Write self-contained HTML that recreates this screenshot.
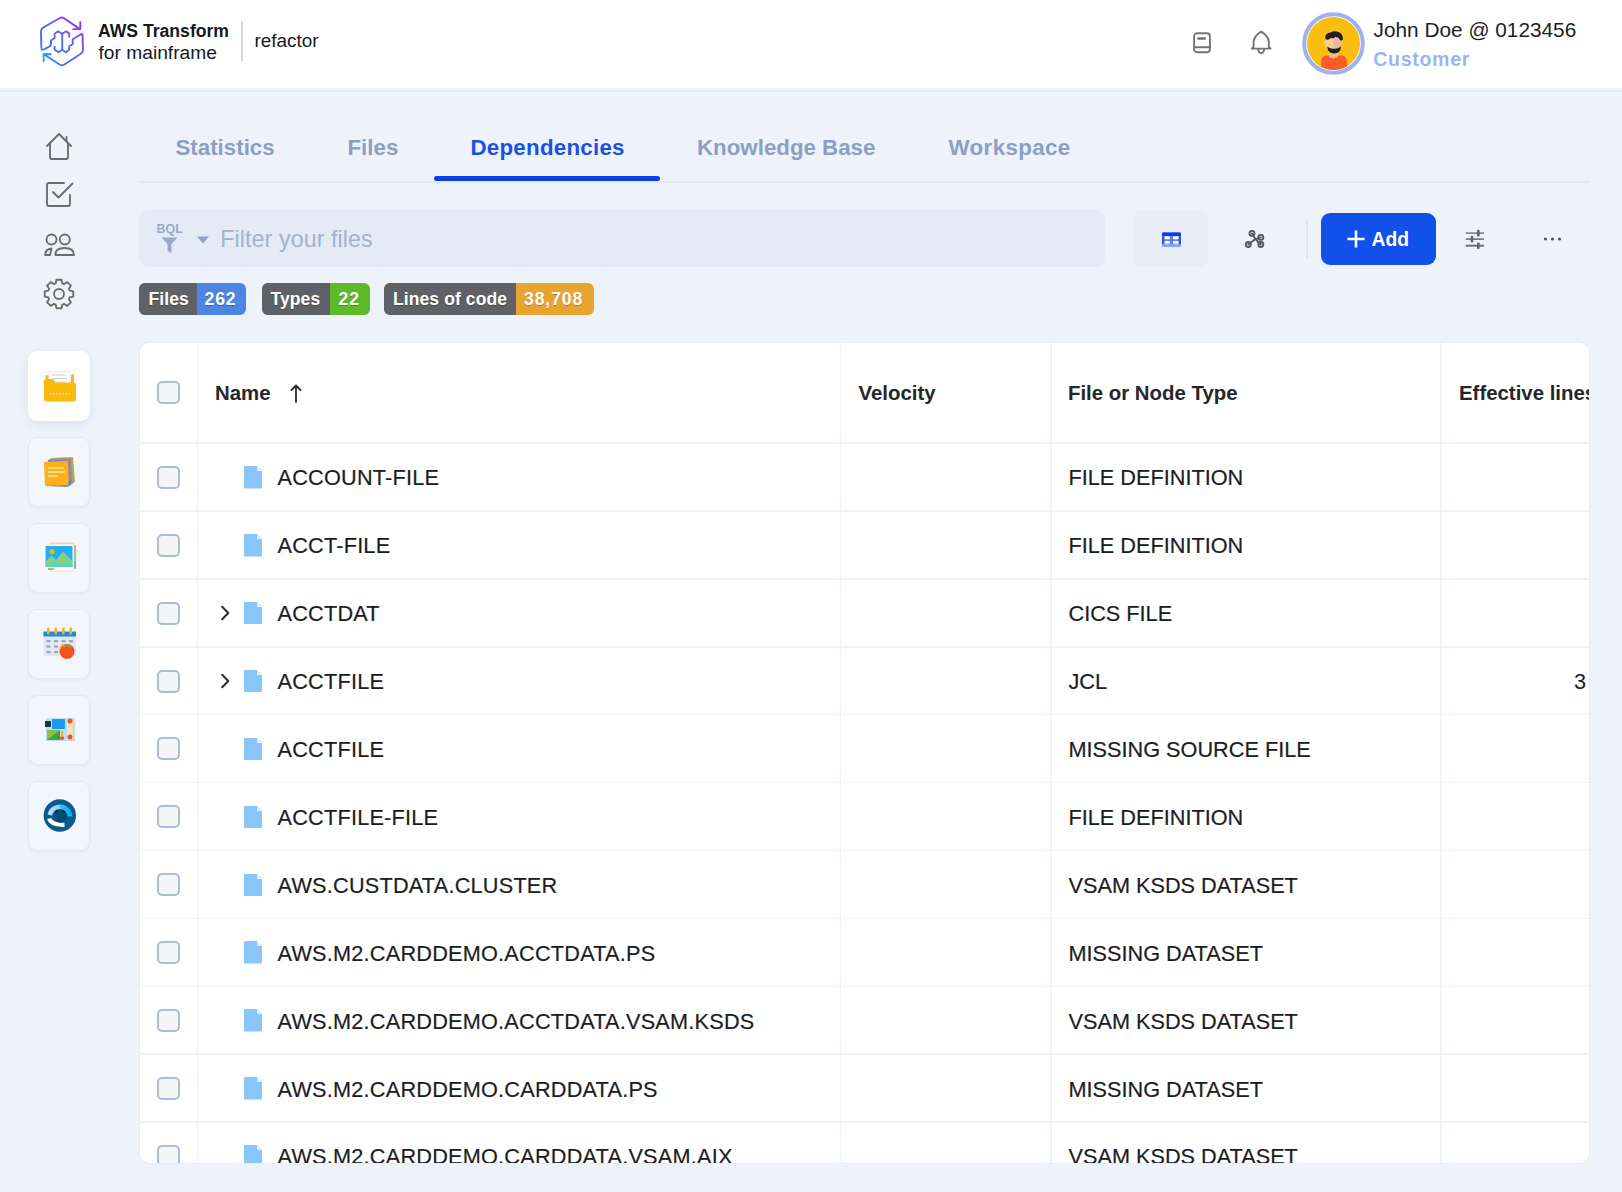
<!DOCTYPE html>
<html><head><meta charset="utf-8"><title>AWS Transform - Dependencies</title>
<style>
html,body{margin:0;padding:0;}
body{width:1622px;height:1192px;position:relative;overflow:hidden;background:#eef3fb;font-family:"Liberation Sans",sans-serif;}
.t{position:absolute;white-space:nowrap;}
</style></head><body>
<div style="position:absolute;left:0;top:0;width:1622px;height:88px;background:#fff"></div><div style="position:absolute;left:0;top:88px;width:1622px;height:1px;background:#f4f4f5"></div><div style="position:absolute;left:0;top:89px;width:1622px;height:1px;background:#eef0f4"></div><div style="position:absolute;left:0;top:90px;width:1622px;height:2px;background:#e6ecf7"></div><div style="position:absolute;left:0;top:92px;width:1622px;height:2px;background:#f1f5fc"></div><svg style="position:absolute;left:36px;top:12px" width="54" height="60" viewBox="0 0 54 60">
<defs><linearGradient id="lg" gradientUnits="userSpaceOnUse" x1="6" y1="50" x2="46" y2="10">
<stop offset="0" stop-color="#10b8f8"/><stop offset="0.25" stop-color="#3b6ff0"/><stop offset="0.55" stop-color="#5f6af0"/><stop offset="0.8" stop-color="#8a3ff2"/><stop offset="1" stop-color="#9130f4"/></linearGradient></defs>
<g fill="none" stroke="url(#lg)" stroke-width="1.9" stroke-linejoin="round" stroke-linecap="round">
<path d="M43.3 16.6 L28 6.2 Q25.7 4.8 23.4 6.2 L7.5 15.4 Q5 17 5 20 L5.4 36 Q5.5 38.5 8 37.3 L13.5 34.5 Q15 33.7 15 32 V28.5 L18.6 26 V21.8 L22.1 19.3 L26.2 21.8 L30.2 19.3 L33.2 21.6 V24.7"/>
<path d="M26.2 21.8 V37.7 L22.6 40.3 L18.6 37.7 V34.7"/>
<path d="M26.2 37.7 L29.7 40.3 L33.2 37.7 V34.2 L36.7 32.2 V27.2 L45.5 22 Q46.5 21.5 46.5 23 L47 38 Q47 40.5 44.5 42 L28 52.8 Q26 54 24 52.8 L8.2 42.5"/>
<path d="M44.3 10.1 V17.1 H37.2"/>
<path d="M7.6 49.3 V42.3 H14.6"/>
</g></svg><div class="t" style="left:98.00px;top:22.50px;font-size:17.6px;line-height:17.6px;font-weight:700;color:#16191f;letter-spacing:0px;">AWS Transform</div><div class="t" style="left:98.50px;top:42.55px;font-size:19.2px;line-height:19.2px;font-weight:400;color:#16191f;letter-spacing:0px;">for mainframe</div><div style="position:absolute;left:241px;top:20.5px;width:2px;height:40px;background:#d3d6dc"></div><div class="t" style="left:254.50px;top:31.80px;font-size:18.9px;line-height:18.9px;font-weight:400;color:#16191f;letter-spacing:0px;">refactor</div><svg style="position:absolute;left:1190px;top:29px" width="24" height="28" viewBox="0 0 24 28">
<g fill="none" stroke="#737373" stroke-width="1.9" stroke-linejoin="round" stroke-linecap="round">
<rect x="4.1" y="4.2" width="15.8" height="19" rx="3"/>
<path d="M4.1 18.3 H19.9"/><path d="M8.2 9.5 H15" stroke-width="2.3"/></g></svg><svg style="position:absolute;left:1249px;top:29px" width="25" height="27" viewBox="0 0 25 27">
<g fill="none" stroke="#737373" stroke-width="1.9" stroke-linejoin="round" stroke-linecap="round">
<path d="M2.8 19.6 L4.6 17.8 V12.8 Q5 7 12.2 2.6 Q19.4 7 19.8 12.8 V17.8 L21.6 19.6 Z"/>
<path d="M9.2 20 Q9.5 24 12.2 24 Q14.9 24 15.2 20"/></g></svg><svg style="position:absolute;left:1302px;top:12px" width="63" height="63" viewBox="0 0 63 63">
<circle cx="31.5" cy="31.5" r="29.3" fill="#fff" stroke="#9bb3f1" stroke-width="4"/>
<circle cx="31.5" cy="31.5" r="26.5" fill="#f8bf10"/>
<clipPath id="ac"><circle cx="31.5" cy="31.5" r="26.5"/></clipPath>
<g clip-path="url(#ac)">
<path d="M19 58 L19.3 48.5 Q19.8 43.8 24 43.5 L40 43.5 Q44.6 43.8 44.8 48.5 L45 58 Z" fill="#fb5a2a"/>
<rect x="27" y="39" width="8.6" height="6.5" fill="#ecc09c"/><path d="M27 43.5 L31.3 47 L35.6 43.5 Z" fill="#e9b79b"/>
<ellipse cx="31.2" cy="31" rx="9" ry="7.6" fill="#f5cc92"/>
<path d="M31.5 23.4 Q40.2 23.5 40.2 31 Q40.2 38.6 31.5 38.6 Z" fill="#e9b89c"/>
<path d="M25.2 34.5 Q25.8 41.4 32 41.4 Q38.6 41.4 39.1 34.5 Q35.5 37.2 32 36.8 Q28.5 37.2 25.2 34.5 Z" fill="#1f2126"/>
<path d="M23.3 26.5 Q22.8 21 28.5 20.5 Q31 18.6 35 19.4 Q41.2 20.5 40.9 27.8 L38.6 28.8 Q37 25.2 33.5 24.8 Q31.5 27.2 29 25.8 Q27 28.2 24.8 27.8 Z" fill="#1f2126"/>
</g></svg><div class="t" style="left:1373.60px;top:19.79px;font-size:20.8px;line-height:20.8px;font-weight:400;color:#1d1d1f;letter-spacing:0px;">John Doe @ 0123456</div><div class="t" style="left:1373.30px;top:49.61px;font-size:19.6px;line-height:19.6px;font-weight:700;color:#98b6f5;letter-spacing:0.65px;">Customer</div><svg style="position:absolute;left:43px;top:130px" width="32" height="32" viewBox="0 0 32 32">
<g fill="none" stroke="#6b6b6b" stroke-width="1.85" stroke-linejoin="round" stroke-linecap="round">
<path d="M4 16 L16 4 L28 16"/><path d="M7 13.5 V27 Q7 29 9 29 H23 Q25 29 25 27 V13.5"/><path d="M23.5 7 V11"/></g></svg><svg style="position:absolute;left:43px;top:178px" width="32" height="32" viewBox="0 0 32 32">
<g fill="none" stroke="#6b6b6b" stroke-width="1.85" stroke-linejoin="round" stroke-linecap="round">
<path d="M21 5 H6 Q4 5 4 7 V26 Q4 28 6 28 H25 Q27 28 27 26 V17"/><path d="M10 14 L15.5 19.5 L29.5 5.5"/></g></svg><svg style="position:absolute;left:42px;top:229px" width="34" height="30" viewBox="0 0 34 30">
<g fill="none" stroke="#6b6b6b" stroke-width="1.85" stroke-linejoin="round" stroke-linecap="round">
<circle cx="9.5" cy="10.5" r="5"/><circle cx="22.8" cy="10.5" r="5"/>
<path d="M3.2 26 Q3.2 20 9.5 19.5 L8 26 Z"/><path d="M13.5 26 Q13 19 22.5 19 Q32 19 32 26 Z"/></g></svg><svg style="position:absolute;left:42px;top:277px" width="34" height="34" viewBox="0 0 34 34">
<g fill="none" stroke="#6b6b6b" stroke-width="1.85" stroke-linejoin="round">
<path d="M13.69 6.30 L14.46 2.72 L19.54 2.72 L20.31 6.30 L22.23 7.09 L25.30 5.11 L28.89 8.70 L26.91 11.77 L27.70 13.69 L31.28 14.46 L31.28 19.54 L27.70 20.31 L26.91 22.23 L28.89 25.30 L25.30 28.89 L22.23 26.91 L20.31 27.70 L19.54 31.28 L14.46 31.28 L13.69 27.70 L11.77 26.91 L8.70 28.89 L5.11 25.30 L7.09 22.23 L6.30 20.31 L2.72 19.54 L2.72 14.46 L6.30 13.69 L7.09 11.77 L5.11 8.70 L8.70 5.11 L11.77 7.09 Z" stroke-linejoin="round"/>
<circle cx="17" cy="17" r="5"/></g></svg><div style="position:absolute;left:28.3px;top:350.6px;width:61.7px;height:70.2px;border-radius:9px;background:#fff;box-shadow:0 3px 10px rgba(150,165,200,0.25)"></div><div style="position:absolute;left:28.3px;top:436.6px;width:60px;height:68.5px;border-radius:9px;background:#f3f6fc;border:1px solid #e3e9f4;box-shadow:0 1px 3px rgba(170,185,215,0.18)"></div><div style="position:absolute;left:28.3px;top:522.6px;width:60px;height:68.5px;border-radius:9px;background:#f3f6fc;border:1px solid #e3e9f4;box-shadow:0 1px 3px rgba(170,185,215,0.18)"></div><div style="position:absolute;left:28.3px;top:608.6px;width:60px;height:68.5px;border-radius:9px;background:#f3f6fc;border:1px solid #e3e9f4;box-shadow:0 1px 3px rgba(170,185,215,0.18)"></div><div style="position:absolute;left:28.3px;top:694.6px;width:60px;height:68.5px;border-radius:9px;background:#f3f6fc;border:1px solid #e3e9f4;box-shadow:0 1px 3px rgba(170,185,215,0.18)"></div><div style="position:absolute;left:28.3px;top:780.6px;width:60px;height:68.5px;border-radius:9px;background:#f3f6fc;border:1px solid #e3e9f4;box-shadow:0 1px 3px rgba(170,185,215,0.18)"></div><svg style="position:absolute;left:42.5px;top:369.1px" width="33" height="33" viewBox="0 0 33 33"><g><rect x="6" y="2.5" width="21" height="17" fill="#fff" stroke="#e3e3e3" stroke-width="0.8"/>
<path d="M9 6 H24 M9 9.5 H24 M9 13 H22" stroke="#cfcfcf" stroke-width="1.2"/>
<path d="M1 12 Q1 10 3 10 H10 L12.5 13.5 H31 Q33 13.5 33 15.5 V30 Q33 32.5 30.5 32.5 H3.5 Q1 32.5 1 30 Z" fill="#f9b90f"/>
<rect x="2.5" y="6" width="3" height="8" rx="1.5" fill="#f9b90f"/><rect x="28" y="5" width="3" height="10" rx="1.5" fill="#f9b90f"/>
<path d="M7 25 H27" stroke="#fde7a6" stroke-width="1.2" stroke-dasharray="2 1"/></g></svg><svg style="position:absolute;left:42.5px;top:455.1px" width="33" height="33" viewBox="0 0 33 33"><g><path d="M8 3 L30 2 L32 27 L24 31 Z" fill="#8bc34a"/><path d="M6 4 L28 3 L30 29 L10 31 Z" fill="#e57373"/>
<path d="M5 5 L27 5 L28 30 L24 32 L2 31 Z" fill="#7986cb"/>
<path d="M1 7 L25 6 L26 30 L2 31 Z" fill="#fbb117"/>
<path d="M5 13 H21 M5 17 H22 M5 21 H15" stroke="#fde2a0" stroke-width="1.5"/><path d="M25 28 L29 24 L27 31 Z" fill="#2196f3"/></g></svg><svg style="position:absolute;left:42.5px;top:541.1px" width="33" height="33" viewBox="0 0 33 33"><g><rect x="6" y="1.5" width="25" height="29" rx="1" fill="#f6d2b8"/><rect x="29" y="4" width="4" height="24" fill="#e8a27e"/><rect x="30" y="12" width="3" height="8" fill="#8fd18a"/><rect x="30" y="20" width="3" height="6" fill="#5ab8f0"/>
<rect x="1" y="3.5" width="30" height="26" rx="1.5" fill="#fff"/><rect x="2.5" y="5" width="27" height="21" fill="#22aef5"/>
<circle cx="9" cy="10.5" r="2.6" fill="#ffb300"/><path d="M2.5 26 V21 L8.5 14.5 L13 19 L20 10.5 L29.5 20 V26 Z" fill="#8ccf7a"/>
<path d="M2.5 26 L11 19.5 L18 24 L23 20 L29.5 24 V26 Z" fill="#5fd3b5"/><rect x="5" y="27" width="6" height="2" fill="#8ccf7a"/></g></svg><svg style="position:absolute;left:42.5px;top:627.1px" width="33" height="33" viewBox="0 0 33 33"><g><rect x="0.5" y="5" width="32.5" height="24" fill="#e1e7f3"/><rect x="0.5" y="4.5" width="32.5" height="5" fill="#1e88e5"/>
<g fill="#f9b21d"><rect x="4" y="0.5" width="2.6" height="7" rx="1.2"/><rect x="11.5" y="0.5" width="2.6" height="7" rx="1.2"/><rect x="19" y="0.5" width="2.6" height="7" rx="1.2"/><rect x="26.5" y="0.5" width="2.6" height="7" rx="1.2"/></g>
<g fill="#9aa5bd"><rect x="3.5" y="13" width="4" height="2.2"/><rect x="11" y="13" width="4" height="2.2"/><rect x="18.5" y="13" width="4" height="2.2"/><rect x="26" y="13" width="4" height="2.2"/>
<rect x="3.5" y="18.5" width="4" height="2.2"/><rect x="11" y="18.5" width="4" height="2.2"/><rect x="3.5" y="24" width="4" height="2.2"/><rect x="11" y="24" width="4" height="2.2"/></g>
<circle cx="24" cy="24.5" r="7.5" fill="#f4511e"/><path d="M19.5 19 Q22 22 24 18.5 Q26 22 28.5 19 L27 17.5 L21 17.5 Z" fill="#7cb342"/><path d="M17.5 22 Q18 18 21 17.8" stroke="#f9a825" stroke-width="1.5" fill="none"/></g></svg><svg style="position:absolute;left:42.5px;top:713.1px" width="33" height="33" viewBox="0 0 33 33"><g><rect x="3" y="5" width="29" height="23" fill="#bbdefb"/><rect x="9" y="6" width="13" height="10" fill="#1e9bf0"/>
<rect x="4" y="17" width="13" height="10" fill="#8bc34a"/><path d="M4 27 L17 17 V27 Z" fill="#43a047"/>
<rect x="24" y="7" width="6" height="19" fill="#fde2a8"/><circle cx="27" cy="8" r="2.5" fill="#f4511e"/><circle cx="27" cy="24" r="2.5" fill="#f4511e"/>
<circle cx="19" cy="25" r="2" fill="#f4511e"/><rect x="18" y="18" width="2" height="6" fill="#f9a825"/>
<rect x="2" y="8" width="6" height="6" fill="#263238"/></g></svg><svg style="position:absolute;left:42.5px;top:799.1px" width="33" height="33" viewBox="0 0 33 33"><g><defs><linearGradient id="cg" x1="0" y1="0" x2="1" y2="0"><stop offset="0" stop-color="#b4dcfb"/><stop offset="0.45" stop-color="#8fd0fa"/><stop offset="0.55" stop-color="#2cc0f5"/><stop offset="1" stop-color="#10b2f6"/></linearGradient></defs>
<circle cx="16.8" cy="16.5" r="16.2" fill="#0c5a8a"/>
<path d="M6.8 16 A10.2 10.2 0 0 1 27 17.5" stroke="url(#cg)" stroke-width="4.6" fill="none"/>
<path d="M6.2 19.5 Q8 26 21.5 25.8" stroke="#ffffff" stroke-width="4.2" fill="none"/>
<circle cx="17.5" cy="17.5" r="6.2" fill="#0a4a76"/><path d="M12 13 L14.5 11.5 M19 11.5 L22 13" stroke="#111" stroke-width="1.5"/></g></svg><div class="t" style="left:175.50px;top:136.72px;font-size:22.3px;line-height:22.3px;font-weight:700;color:#8d9fc0;letter-spacing:0px;">Statistics</div><div class="t" style="left:347.50px;top:136.72px;font-size:22.3px;line-height:22.3px;font-weight:700;color:#8d9fc0;letter-spacing:0px;">Files</div><div class="t" style="left:470.50px;top:136.72px;font-size:22.3px;line-height:22.3px;font-weight:700;color:#1c4fe3;letter-spacing:0.25px;">Dependencies</div><div class="t" style="left:697.00px;top:136.72px;font-size:22.3px;line-height:22.3px;font-weight:700;color:#8d9fc0;letter-spacing:0px;">Knowledge Base</div><div class="t" style="left:948.50px;top:136.72px;font-size:22.3px;line-height:22.3px;font-weight:700;color:#8d9fc0;letter-spacing:0.4px;">Workspace</div><div style="position:absolute;left:139px;top:181px;width:1451px;height:2px;background:#e5eaf2"></div><div style="position:absolute;left:434.4px;top:176px;width:226px;height:5px;border-radius:3px;background:#0b3fe6"></div><div style="position:absolute;left:139.2px;top:210px;width:965.6px;height:57px;border-radius:9px;background:#e4ebf6"></div><div class="t" style="left:156.50px;top:222.79px;font-size:12.3px;line-height:12.3px;font-weight:700;color:#9aaac6;letter-spacing:0.1px;">BQL</div><svg style="position:absolute;left:160px;top:236px" width="19" height="18" viewBox="0 0 19 18">
<path d="M1.5 1.5 H17.5 L11.5 8 V17 L7.5 15 V8 Z" fill="#9aaac6"/></svg><svg style="position:absolute;left:196px;top:235px" width="14" height="10" viewBox="0 0 14 10">
<path d="M1 1.5 H13 L7 8.5 Z" fill="#8fa1c2"/></svg><div class="t" style="left:220.30px;top:228.46px;font-size:23.2px;line-height:23.2px;font-weight:400;color:#a3b2cc;letter-spacing:0.1px;">Filter your files</div><div style="position:absolute;left:1133px;top:209.8px;width:75.4px;height:57.7px;border-radius:9px;background:#e8edf7"></div><svg style="position:absolute;left:1158px;top:228px" width="26" height="22" viewBox="1158 228 26 22">
<rect x="1162" y="232.6" width="18.9" height="14.3" rx="2.5" fill="#5b83ee"/>
<rect x="1162" y="232.6" width="2.2" height="12" fill="#2458e8"/><rect x="1178.7" y="232.6" width="2.2" height="12" fill="#2458e8"/>
<rect x="1162" y="232.6" width="18.9" height="3.4" rx="1.6" fill="#0b3fe0"/>
<rect x="1162" y="244" width="18.9" height="2.9" rx="1.3" fill="#86a5f2"/>
<g fill="#fff"><rect x="1164.4" y="236.3" width="5.6" height="3" rx="1.3"/><rect x="1172.8" y="236.3" width="5.9" height="3" rx="1.3"/>
<rect x="1164.4" y="241" width="5.6" height="2.8" rx="1.2"/><rect x="1172.8" y="241" width="5.9" height="2.8" rx="1.2"/></g>
</svg><svg style="position:absolute;left:1242px;top:226px" width="26" height="26" viewBox="1242 226 26 26">
<g fill="none" stroke="#55585e" stroke-width="1.9" stroke-linecap="round"><path d="M1252 233.4 L1255.4 239.1 L1260.8 237.4 M1255.4 239.1 L1248.3 244.5 M1255.4 239.1 L1260.8 244.5"/>
<circle cx="1252" cy="233.4" r="2.5"/><circle cx="1260.8" cy="237.4" r="2.5"/><circle cx="1248.3" cy="244.5" r="2.5"/><circle cx="1260.8" cy="244.5" r="2.5"/></g></svg><div style="position:absolute;left:1306px;top:219.4px;width:1.5px;height:39px;background:#dfe5ef"></div><div style="position:absolute;left:1321px;top:212.9px;width:114.5px;height:51.8px;border-radius:9px;background:#1151ea"></div><svg style="position:absolute;left:1346px;top:229px" width="20" height="20" viewBox="0 0 20 20">
<path d="M10 1.5 V18.5 M1.5 10 H18.5" stroke="#fff" stroke-width="2.6"/></svg><div class="t" style="left:1371.50px;top:229.66px;font-size:19.3px;line-height:19.3px;font-weight:700;color:#ffffff;letter-spacing:0px;">Add</div><svg style="position:absolute;left:1460px;top:226px" width="30" height="26" viewBox="1460 226 30 26">
<g stroke="#6d7075" fill="none"><path d="M1465.7 233.1 H1484" stroke-width="1.4"/><path d="M1465.7 239.1 H1484" stroke-width="1.6"/><path d="M1465.7 245.7 H1484" stroke-width="2"/></g>
<g fill="#5f6266"><rect x="1477" y="229.8" width="2.6" height="6.6" rx="1"/><rect x="1470.7" y="235.8" width="2.6" height="6.6" rx="1"/><rect x="1477" y="242.4" width="2.6" height="6.6" rx="1"/></g></svg><svg style="position:absolute;left:1543px;top:235px" width="19" height="8" viewBox="0 0 19 8">
<g fill="#555"><circle cx="2.5" cy="4" r="1.6"/><circle cx="9.5" cy="4" r="1.6"/><circle cx="16.5" cy="4" r="1.6"/></g></svg><div style="position:absolute;left:139.2px;top:282.5px;width:107.30000000000001px;height:32px;border-radius:6px;background:#4a86e2;overflow:hidden"><div style="position:absolute;left:0;top:0;width:57.400000000000006px;height:32px;background:#5f6166"></div></div><div class="t" style="left:148.50px;top:291.49px;font-size:17.5px;line-height:17.5px;font-weight:700;color:#fff;letter-spacing:0.1px;text-shadow:0 1px 0 rgba(0,0,0,0.3)">Files</div><div class="t" style="left:204.50px;top:291.40px;font-size:17.6px;line-height:17.6px;font-weight:700;color:#fff;letter-spacing:0.9px;text-shadow:0 1px 0 rgba(0,0,0,0.25)">262</div><div style="position:absolute;left:261.5px;top:282.5px;width:108.5px;height:32px;border-radius:6px;background:#5cba2b;overflow:hidden"><div style="position:absolute;left:0;top:0;width:68.5px;height:32px;background:#5f6166"></div></div><div class="t" style="left:270.50px;top:291.49px;font-size:17.5px;line-height:17.5px;font-weight:700;color:#fff;letter-spacing:0.1px;text-shadow:0 1px 0 rgba(0,0,0,0.3)">Types</div><div class="t" style="left:338.50px;top:291.40px;font-size:17.6px;line-height:17.6px;font-weight:700;color:#fff;letter-spacing:0.9px;text-shadow:0 1px 0 rgba(0,0,0,0.25)">22</div><div style="position:absolute;left:384px;top:282.5px;width:209.70000000000005px;height:32px;border-radius:6px;background:#e8a431;overflow:hidden"><div style="position:absolute;left:0;top:0;width:132.20000000000005px;height:32px;background:#5f6166"></div></div><div class="t" style="left:393.00px;top:291.49px;font-size:17.5px;line-height:17.5px;font-weight:700;color:#fff;letter-spacing:0.1px;text-shadow:0 1px 0 rgba(0,0,0,0.3)">Lines of code</div><div class="t" style="left:524.00px;top:291.40px;font-size:17.6px;line-height:17.6px;font-weight:700;color:#fff;letter-spacing:0.9px;text-shadow:0 1px 0 rgba(0,0,0,0.25)">38,708</div><div style="position:absolute;left:139.5px;top:342.5px;width:1449.2px;height:820.2px;border-radius:9px;background:#fff;box-shadow:0 0 0 1px #e7ecf5;overflow:hidden"><div style="position:absolute;left:57.1px;top:0;width:1.5px;height:820.2px;background:#eff3fa"></div><div style="position:absolute;left:700.3px;top:0;width:1.5px;height:820.2px;background:#eff3fa"></div><div style="position:absolute;left:910.8px;top:0;width:1.5px;height:820.2px;background:#eff3fa"></div><div style="position:absolute;left:1300.7px;top:0;width:1.5px;height:820.2px;background:#eff3fa"></div><div style="position:absolute;left:0;top:99.8px;width:1449.2px;height:1.5px;background:#eef2fa"></div><div style="position:absolute;left:0;top:167.7px;width:1449.2px;height:1.5px;background:#eef2fa"></div><div style="position:absolute;left:0;top:235.6px;width:1449.2px;height:1.5px;background:#eef2fa"></div><div style="position:absolute;left:0;top:303.5px;width:1449.2px;height:1.5px;background:#eef2fa"></div><div style="position:absolute;left:0;top:371.4px;width:1449.2px;height:1.5px;background:#eef2fa"></div><div style="position:absolute;left:0;top:439.3px;width:1449.2px;height:1.5px;background:#eef2fa"></div><div style="position:absolute;left:0;top:507.2px;width:1449.2px;height:1.5px;background:#eef2fa"></div><div style="position:absolute;left:0;top:575.1px;width:1449.2px;height:1.5px;background:#eef2fa"></div><div style="position:absolute;left:0;top:643.0px;width:1449.2px;height:1.5px;background:#eef2fa"></div><div style="position:absolute;left:0;top:710.9px;width:1449.2px;height:1.5px;background:#eef2fa"></div><div style="position:absolute;left:0;top:778.8px;width:1449.2px;height:1.5px;background:#eef2fa"></div><div style="position:absolute;left:17.7px;top:38.9px;width:19px;height:19px;border:2.1px solid #adbbd5;border-radius:5px;background:#f4f5f7"></div><div class="t" style="left:75.50px;top:40.93px;font-size:20.4px;line-height:20.4px;font-weight:700;color:#25262a;letter-spacing:0px;">Name</div><svg style="position:absolute;left:149.5px;top:40.5px" width="14" height="20" viewBox="0 0 14 20"><path d="M7 2.5 V19 M2.5 7 L7 2.5 L11.5 7" fill="none" stroke="#2a2a2e" stroke-width="1.8" stroke-linecap="round" stroke-linejoin="round"/></svg><div class="t" style="left:719.00px;top:40.93px;font-size:20.4px;line-height:20.4px;font-weight:700;color:#25262a;letter-spacing:0px;">Velocity</div><div class="t" style="left:928.50px;top:40.93px;font-size:20.4px;line-height:20.4px;font-weight:700;color:#25262a;letter-spacing:0px;">File or Node Type</div><div class="t" style="left:1319.50px;top:40.93px;font-size:20.4px;line-height:20.4px;font-weight:700;color:#25262a;letter-spacing:0px;">Effective lines</div><div style="position:absolute;left:17.7px;top:123.2px;width:19px;height:19px;border:2.1px solid #adbbd5;border-radius:5px;background:#f4f5f7"></div><svg style="position:absolute;left:104.5px;top:123.6px" width="18" height="22.5" viewBox="0 0 18 22.5"><path d="M0 1 Q0 0 1 0 H13 L18 5 V21.5 Q18 22.5 17 22.5 H1 Q0 22.5 0 21.5 Z" fill="#89c6fa"/><path d="M13 0 V5 H18 Z" fill="#e0efff"/></svg><div class="t" style="left:138.00px;top:124.98px;font-size:21.7px;line-height:21.7px;font-weight:400;color:#1d1d1f;letter-spacing:0.22px;-webkit-text-stroke:0.2px #1d1d1f">ACCOUNT-FILE</div><div class="t" style="left:929.00px;top:124.98px;font-size:21.7px;line-height:21.7px;font-weight:400;color:#1d1d1f;letter-spacing:0px;-webkit-text-stroke:0.2px #1d1d1f">FILE DEFINITION</div><div style="position:absolute;left:17.7px;top:191.2px;width:19px;height:19px;border:2.1px solid #adbbd5;border-radius:5px;background:#f4f5f7"></div><svg style="position:absolute;left:104.5px;top:191.5px" width="18" height="22.5" viewBox="0 0 18 22.5"><path d="M0 1 Q0 0 1 0 H13 L18 5 V21.5 Q18 22.5 17 22.5 H1 Q0 22.5 0 21.5 Z" fill="#89c6fa"/><path d="M13 0 V5 H18 Z" fill="#e0efff"/></svg><div class="t" style="left:138.00px;top:192.88px;font-size:21.7px;line-height:21.7px;font-weight:400;color:#1d1d1f;letter-spacing:0.22px;-webkit-text-stroke:0.2px #1d1d1f">ACCT-FILE</div><div class="t" style="left:929.00px;top:192.88px;font-size:21.7px;line-height:21.7px;font-weight:400;color:#1d1d1f;letter-spacing:0px;-webkit-text-stroke:0.2px #1d1d1f">FILE DEFINITION</div><div style="position:absolute;left:17.7px;top:259.1px;width:19px;height:19px;border:2.1px solid #adbbd5;border-radius:5px;background:#f4f5f7"></div><svg style="position:absolute;left:79.5px;top:262.6px" width="13" height="16" viewBox="0 0 13 16"><path d="M3.2 1.8 L9.3 8 L3.2 14.2" fill="none" stroke="#2b2c30" stroke-width="2" stroke-linecap="round" stroke-linejoin="round"/></svg><svg style="position:absolute;left:104.5px;top:259.4px" width="18" height="22.5" viewBox="0 0 18 22.5"><path d="M0 1 Q0 0 1 0 H13 L18 5 V21.5 Q18 22.5 17 22.5 H1 Q0 22.5 0 21.5 Z" fill="#89c6fa"/><path d="M13 0 V5 H18 Z" fill="#e0efff"/></svg><div class="t" style="left:138.00px;top:260.78px;font-size:21.7px;line-height:21.7px;font-weight:400;color:#1d1d1f;letter-spacing:0.22px;-webkit-text-stroke:0.2px #1d1d1f">ACCTDAT</div><div class="t" style="left:929.00px;top:260.78px;font-size:21.7px;line-height:21.7px;font-weight:400;color:#1d1d1f;letter-spacing:0px;-webkit-text-stroke:0.2px #1d1d1f">CICS FILE</div><div style="position:absolute;left:17.7px;top:327.0px;width:19px;height:19px;border:2.1px solid #adbbd5;border-radius:5px;background:#f4f5f7"></div><svg style="position:absolute;left:79.5px;top:330.5px" width="13" height="16" viewBox="0 0 13 16"><path d="M3.2 1.8 L9.3 8 L3.2 14.2" fill="none" stroke="#2b2c30" stroke-width="2" stroke-linecap="round" stroke-linejoin="round"/></svg><svg style="position:absolute;left:104.5px;top:327.2px" width="18" height="22.5" viewBox="0 0 18 22.5"><path d="M0 1 Q0 0 1 0 H13 L18 5 V21.5 Q18 22.5 17 22.5 H1 Q0 22.5 0 21.5 Z" fill="#89c6fa"/><path d="M13 0 V5 H18 Z" fill="#e0efff"/></svg><div class="t" style="left:138.00px;top:328.68px;font-size:21.7px;line-height:21.7px;font-weight:400;color:#1d1d1f;letter-spacing:0.22px;-webkit-text-stroke:0.2px #1d1d1f">ACCTFILE</div><div class="t" style="left:929.00px;top:328.68px;font-size:21.7px;line-height:21.7px;font-weight:400;color:#1d1d1f;letter-spacing:0px;-webkit-text-stroke:0.2px #1d1d1f">JCL</div><div class="t" style="left:1434.50px;top:328.68px;font-size:21.7px;line-height:21.7px;font-weight:400;color:#1d1d1f;letter-spacing:0px;">3</div><div style="position:absolute;left:17.7px;top:394.9px;width:19px;height:19px;border:2.1px solid #adbbd5;border-radius:5px;background:#f4f5f7"></div><svg style="position:absolute;left:104.5px;top:395.2px" width="18" height="22.5" viewBox="0 0 18 22.5"><path d="M0 1 Q0 0 1 0 H13 L18 5 V21.5 Q18 22.5 17 22.5 H1 Q0 22.5 0 21.5 Z" fill="#89c6fa"/><path d="M13 0 V5 H18 Z" fill="#e0efff"/></svg><div class="t" style="left:138.00px;top:396.58px;font-size:21.7px;line-height:21.7px;font-weight:400;color:#1d1d1f;letter-spacing:0.22px;-webkit-text-stroke:0.2px #1d1d1f">ACCTFILE</div><div class="t" style="left:929.00px;top:396.58px;font-size:21.7px;line-height:21.7px;font-weight:400;color:#1d1d1f;letter-spacing:0px;-webkit-text-stroke:0.2px #1d1d1f">MISSING SOURCE FILE</div><div style="position:absolute;left:17.7px;top:462.8px;width:19px;height:19px;border:2.1px solid #adbbd5;border-radius:5px;background:#f4f5f7"></div><svg style="position:absolute;left:104.5px;top:463.0px" width="18" height="22.5" viewBox="0 0 18 22.5"><path d="M0 1 Q0 0 1 0 H13 L18 5 V21.5 Q18 22.5 17 22.5 H1 Q0 22.5 0 21.5 Z" fill="#89c6fa"/><path d="M13 0 V5 H18 Z" fill="#e0efff"/></svg><div class="t" style="left:138.00px;top:464.48px;font-size:21.7px;line-height:21.7px;font-weight:400;color:#1d1d1f;letter-spacing:0.22px;-webkit-text-stroke:0.2px #1d1d1f">ACCTFILE-FILE</div><div class="t" style="left:929.00px;top:464.48px;font-size:21.7px;line-height:21.7px;font-weight:400;color:#1d1d1f;letter-spacing:0px;-webkit-text-stroke:0.2px #1d1d1f">FILE DEFINITION</div><div style="position:absolute;left:17.7px;top:530.7px;width:19px;height:19px;border:2.1px solid #adbbd5;border-radius:5px;background:#f4f5f7"></div><svg style="position:absolute;left:104.5px;top:531.0px" width="18" height="22.5" viewBox="0 0 18 22.5"><path d="M0 1 Q0 0 1 0 H13 L18 5 V21.5 Q18 22.5 17 22.5 H1 Q0 22.5 0 21.5 Z" fill="#89c6fa"/><path d="M13 0 V5 H18 Z" fill="#e0efff"/></svg><div class="t" style="left:138.00px;top:532.38px;font-size:21.7px;line-height:21.7px;font-weight:400;color:#1d1d1f;letter-spacing:0.22px;-webkit-text-stroke:0.2px #1d1d1f">AWS.CUSTDATA.CLUSTER</div><div class="t" style="left:929.00px;top:532.38px;font-size:21.7px;line-height:21.7px;font-weight:400;color:#1d1d1f;letter-spacing:0px;-webkit-text-stroke:0.2px #1d1d1f">VSAM KSDS DATASET</div><div style="position:absolute;left:17.7px;top:598.6px;width:19px;height:19px;border:2.1px solid #adbbd5;border-radius:5px;background:#f4f5f7"></div><svg style="position:absolute;left:104.5px;top:598.9px" width="18" height="22.5" viewBox="0 0 18 22.5"><path d="M0 1 Q0 0 1 0 H13 L18 5 V21.5 Q18 22.5 17 22.5 H1 Q0 22.5 0 21.5 Z" fill="#89c6fa"/><path d="M13 0 V5 H18 Z" fill="#e0efff"/></svg><div class="t" style="left:138.00px;top:600.28px;font-size:21.7px;line-height:21.7px;font-weight:400;color:#1d1d1f;letter-spacing:0.22px;-webkit-text-stroke:0.2px #1d1d1f">AWS.M2.CARDDEMO.ACCTDATA.PS</div><div class="t" style="left:929.00px;top:600.28px;font-size:21.7px;line-height:21.7px;font-weight:400;color:#1d1d1f;letter-spacing:0px;-webkit-text-stroke:0.2px #1d1d1f">MISSING DATASET</div><div style="position:absolute;left:17.7px;top:666.5px;width:19px;height:19px;border:2.1px solid #adbbd5;border-radius:5px;background:#f4f5f7"></div><svg style="position:absolute;left:104.5px;top:666.8px" width="18" height="22.5" viewBox="0 0 18 22.5"><path d="M0 1 Q0 0 1 0 H13 L18 5 V21.5 Q18 22.5 17 22.5 H1 Q0 22.5 0 21.5 Z" fill="#89c6fa"/><path d="M13 0 V5 H18 Z" fill="#e0efff"/></svg><div class="t" style="left:138.00px;top:668.18px;font-size:21.7px;line-height:21.7px;font-weight:400;color:#1d1d1f;letter-spacing:0.22px;-webkit-text-stroke:0.2px #1d1d1f">AWS.M2.CARDDEMO.ACCTDATA.VSAM.KSDS</div><div class="t" style="left:929.00px;top:668.18px;font-size:21.7px;line-height:21.7px;font-weight:400;color:#1d1d1f;letter-spacing:0px;-webkit-text-stroke:0.2px #1d1d1f">VSAM KSDS DATASET</div><div style="position:absolute;left:17.7px;top:734.4px;width:19px;height:19px;border:2.1px solid #adbbd5;border-radius:5px;background:#f4f5f7"></div><svg style="position:absolute;left:104.5px;top:734.7px" width="18" height="22.5" viewBox="0 0 18 22.5"><path d="M0 1 Q0 0 1 0 H13 L18 5 V21.5 Q18 22.5 17 22.5 H1 Q0 22.5 0 21.5 Z" fill="#89c6fa"/><path d="M13 0 V5 H18 Z" fill="#e0efff"/></svg><div class="t" style="left:138.00px;top:736.08px;font-size:21.7px;line-height:21.7px;font-weight:400;color:#1d1d1f;letter-spacing:0.22px;-webkit-text-stroke:0.2px #1d1d1f">AWS.M2.CARDDEMO.CARDDATA.PS</div><div class="t" style="left:929.00px;top:736.08px;font-size:21.7px;line-height:21.7px;font-weight:400;color:#1d1d1f;letter-spacing:0px;-webkit-text-stroke:0.2px #1d1d1f">MISSING DATASET</div><div style="position:absolute;left:17.7px;top:802.2px;width:19px;height:19px;border:2.1px solid #adbbd5;border-radius:5px;background:#f4f5f7"></div><svg style="position:absolute;left:104.5px;top:802.5px" width="18" height="22.5" viewBox="0 0 18 22.5"><path d="M0 1 Q0 0 1 0 H13 L18 5 V21.5 Q18 22.5 17 22.5 H1 Q0 22.5 0 21.5 Z" fill="#89c6fa"/><path d="M13 0 V5 H18 Z" fill="#e0efff"/></svg><div class="t" style="left:138.00px;top:803.98px;font-size:21.7px;line-height:21.7px;font-weight:400;color:#1d1d1f;letter-spacing:0.22px;-webkit-text-stroke:0.2px #1d1d1f">AWS.M2.CARDDEMO.CARDDATA.VSAM.AIX</div><div class="t" style="left:929.00px;top:803.98px;font-size:21.7px;line-height:21.7px;font-weight:400;color:#1d1d1f;letter-spacing:0px;-webkit-text-stroke:0.2px #1d1d1f">VSAM KSDS DATASET</div></div>
</body></html>
